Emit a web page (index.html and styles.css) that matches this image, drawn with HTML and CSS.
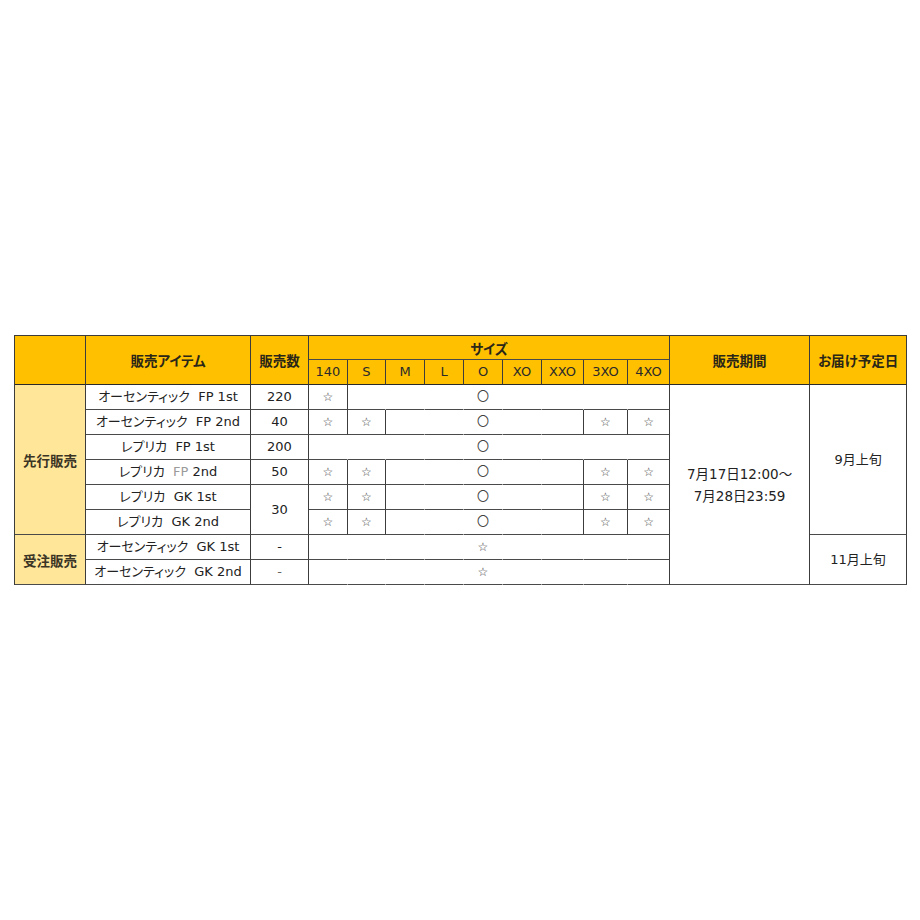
FILE: index.html
```html
<!DOCTYPE html>
<html lang="ja">
<head>
<meta charset="utf-8">
<title>販売スケジュール</title>
<link rel="stylesheet" href="styles.css">
</head>
<body>
<table class="sched">
  <colgroup>
    <col class="c-cat"><col class="c-item"><col class="c-num">
    <col class="c-140"><col class="c-s"><col class="c-m"><col class="c-l"><col class="c-o"><col class="c-xo"><col class="c-xxo"><col class="c-3xo"><col class="c-4xo">
    <col class="c-period"><col class="c-deliv">
  </colgroup>
  <thead>
    <tr class="hr1">
      <th rowspan="2"></th>
      <th rowspan="2">販売アイテム</th>
      <th rowspan="2">販売数</th>
      <th colspan="9" class="size-title">サイズ</th>
      <th rowspan="2">販売期間</th>
      <th rowspan="2">お届け予定日</th>
    </tr>
    <tr class="hr2">
      <th class="sz">140</th><th class="sz">S</th><th class="sz">M</th><th class="sz">L</th><th class="sz">O</th><th class="sz">XO</th><th class="sz">XXO</th><th class="sz">3XO</th><th class="sz">4XO</th>
    </tr>
  </thead>
  <tbody>
    <tr>
      <td rowspan="6" class="cat">先行販売</td>
      <td>オーセンティック&nbsp; FP 1st</td>
      <td>220</td>
      <td class="mk">☆</td>
      <td class="j"></td><td class="j"></td><td class="j"></td><td class="j mk">〇</td><td class="j"></td><td class="j"></td><td class="j"></td><td></td>
      <td rowspan="8" class="period">7月17日12:00～<br>7月28日23:59</td>
      <td rowspan="6">9月上旬</td>
    </tr>
    <tr>
      <td>オーセンティック&nbsp; FP 2nd</td>
      <td>40</td>
      <td class="mk">☆</td><td class="mk">☆</td>
      <td class="j"></td><td class="j"></td><td class="j mk">〇</td><td class="j"></td><td></td>
      <td class="mk">☆</td><td class="mk">☆</td>
    </tr>
    <tr>
      <td>レプリカ&nbsp; FP 1st</td>
      <td>200</td>
      <td class="j"></td><td class="j"></td><td class="j"></td><td class="j"></td><td class="j mk">〇</td><td class="j"></td><td class="j"></td><td class="j"></td><td></td>
    </tr>
    <tr>
      <td>レプリカ&nbsp; <span class="faint">FP</span> 2nd</td>
      <td>50</td>
      <td class="mk">☆</td><td class="mk">☆</td>
      <td class="j"></td><td class="j"></td><td class="j mk">〇</td><td class="j"></td><td></td>
      <td class="mk">☆</td><td class="mk">☆</td>
    </tr>
    <tr>
      <td>レプリカ&nbsp; GK 1st</td>
      <td rowspan="2">30</td>
      <td class="mk">☆</td><td class="mk">☆</td>
      <td class="j"></td><td class="j"></td><td class="j mk">〇</td><td class="j"></td><td></td>
      <td class="mk">☆</td><td class="mk">☆</td>
    </tr>
    <tr>
      <td>レプリカ&nbsp; GK 2nd</td>
      <td class="mk">☆</td><td class="mk">☆</td>
      <td class="j"></td><td class="j"></td><td class="j mk">〇</td><td class="j"></td><td></td>
      <td class="mk">☆</td><td class="mk">☆</td>
    </tr>
    <tr>
      <td rowspan="2" class="cat">受注販売</td>
      <td>オーセンティック&nbsp; GK 1st</td>
      <td>-</td>
      <td class="j"></td><td class="j"></td><td class="j"></td><td class="j"></td><td class="j mk">☆</td><td class="j"></td><td class="j"></td><td class="j"></td><td></td>
      <td rowspan="2">11月上旬</td>
    </tr>
    <tr>
      <td>オーセンティック&nbsp; GK 2nd</td>
      <td class="dash">-</td>
      <td class="j"></td><td class="j"></td><td class="j"></td><td class="j"></td><td class="j mk">☆</td><td class="j"></td><td class="j"></td><td class="j"></td><td></td>
    </tr>
  </tbody>
</table>
</body>
</html>
```

FILE: styles.css
```css
html, body {
  margin: 0;
  padding: 0;
  background: #ffffff;
}

body {
  padding: 335px 0 0 14px;
}

.sched {
  table-layout: fixed;
  width: 893px;
  border-collapse: separate;
  border-spacing: 0;
  border-top: 1px solid #3c3c3c;
  border-left: 1px solid #3c3c3c;
  font-family: "DejaVu Sans", "Noto Sans CJK JP", sans-serif;
  font-feature-settings: "palt";
  font-size: 13px;
  color: #222222;
}

.c-cat { width: 71px; }
.c-item { width: 165px; }
.c-num { width: 58px; }
.c-140 { width: 39px; }
.c-s { width: 38px; }
.c-m { width: 39px; }
.c-l { width: 39px; }
.c-o { width: 39px; }
.c-xo { width: 39px; }
.c-xxo { width: 42px; }
.c-3xo { width: 44px; }
.c-4xo { width: 42px; }
.c-period { width: 140px; }
.c-deliv { width: 97px; }

.sched th,
.sched td {
  padding: 0;
  border-right: 1px solid #3c3c3c;
  border-bottom: 1px solid #4a4a4a;
  text-align: center;
  vertical-align: middle;
  white-space: nowrap;
  overflow: hidden;
  line-height: 22px;
}

.sched th {
  background: #ffc000;
  color: #2a2618;
  font-family: "Noto Sans CJK JP", sans-serif;
  font-weight: 700;
  font-size: 13.5px;
}

.sched th.sz {
  font-family: "DejaVu Sans", "Noto Sans CJK JP", sans-serif;
  font-weight: 400;
  font-size: 13px;
  color: #2a2a2a;
}

.sched thead tr:last-child th,
.sched thead th[rowspan] {
  border-bottom: 1px solid #2a2a2a;
}

.hr1 { height: 24px; }
.hr2 { height: 25px; }
.sched tbody tr { height: 25px; }

.sched td.cat {
  background: #ffe699;
  font-family: "Noto Sans CJK JP", sans-serif;
  font-weight: 700;
  font-size: 13.5px;
  color: #3a3425;
}

.sched td.j {
  border-right-color: transparent;
}

.sched td.mk {
  font-size: 12px;
  color: #404040;
}

.sched td.period {
  font-size: 13.5px;
  line-height: 22px;
}

.faint {
  color: #9a9a9a;
}

.dash {
  color: #666666;
}
```
